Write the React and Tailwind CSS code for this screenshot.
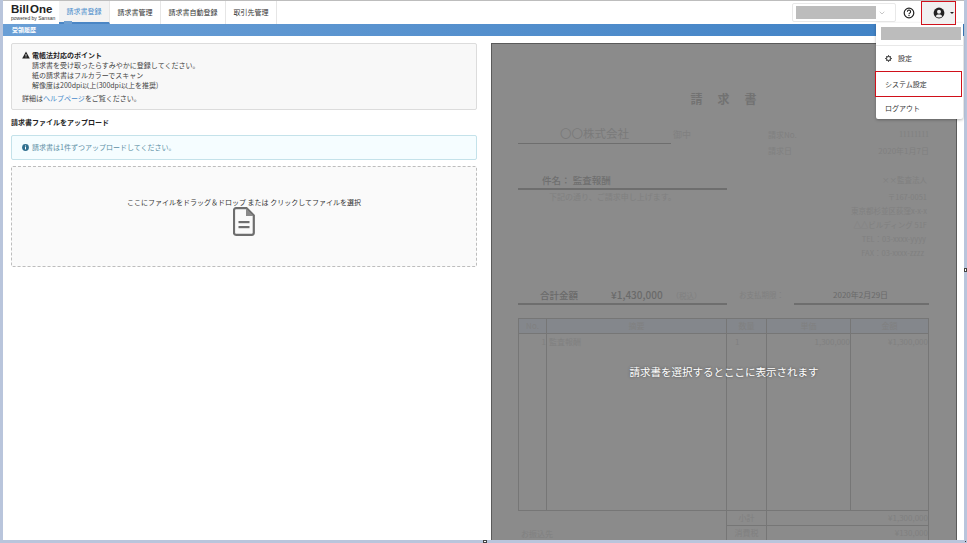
import { ChevronDown } from 'lucide-react';

const font = { fontFamily: '"Noto Sans CJK JP", "Noto Sans", sans-serif' };

const tabs = ['請求書登録', '請求書管理', '請求書自動登録', '取引先管理'];

function Logo() {
  return (
    <div className="w-[56px] pl-[8px] pt-[3px] shrink-0 font-['Liberation_Sans',sans-serif]">
      <div className="text-[11.5px] leading-[11px] font-bold text-[#222] [word-spacing:-2px] whitespace-nowrap">
        Bill One
      </div>
      <div className="text-[5px] leading-[6px] text-[#333] whitespace-nowrap">
        powered by Sansan
      </div>
    </div>
  );
}

function Header() {
  return (
    <div className="h-[23px] flex items-stretch bg-white">
      <Logo />
      <nav className="flex">
        {tabs.map((t, i) => (
          <div
            key={t}
            className={`relative h-[23px] flex items-center justify-center px-[7.5px] text-[7px] border-r border-[#e6e6e6] ${
              i === 0 ? 'bg-[#f3f3f3] text-[#4a8ccb] border-b-2 border-b-[#4a86c5]' : 'text-[#333]'
            }`}
          >
            {t}
            {i === 0 && <div className="absolute left-[5px] bottom-[-2px] w-[8px] h-[3px] bg-[#6f9fd0]" />}
          </div>
        ))}
      </nav>
      <div className="ml-auto flex items-start pr-[8px]">
        <div className="mt-[2px] w-[104px] h-[19px] border border-[#e8e8e8] rounded-[2px] flex items-center pl-[3px]">
          <div className="w-[80px] h-[13px] bg-[#bcbcbc]" />
          <ChevronDown className="w-[8px] h-[8px] ml-[2px] text-[#aaa]" />
        </div>
        <div className="w-[25px] h-[23px] flex items-center justify-center">
          <svg width="12" height="12" viewBox="0 0 12 12" fill="none">
            <circle cx="6" cy="6" r="4.8" stroke="#222" strokeWidth="1.2" />
            <path d="M4.4 4.7a1.6 1.6 0 1 1 2.4 1.4c-.6.3-.8.6-.8 1.1" stroke="#222" strokeWidth="1.1" />
            <rect x="5.4" y="8" width="1.2" height="1.1" fill="#222" />
          </svg>
        </div>
        <div className="relative z-30 w-[35px] h-[24px] bg-[#f0f0f0] flex items-center justify-center border border-[#d0101a]">
          <svg width="12" height="12" viewBox="0 0 12 12">
            <circle cx="6" cy="6" r="5.4" fill="#222" />
            <circle cx="6" cy="4.8" r="2" fill="#f0f0f0" />
            <path d="M2.6 9.2C3.4 7.8 4.6 7.4 6 7.4s2.6.4 3.4 1.8A4.6 4.6 0 0 1 6 10.6a4.6 4.6 0 0 1-3.4-1.4z" fill="#f0f0f0" />
          </svg>
          <div className="absolute right-[1px] top-[10px] w-0 h-0 border-x-[2.5px] border-x-transparent border-t-[2.5px] border-t-[#222]" />
        </div>
      </div>
    </div>
  );
}

function Notice() {
  return (
    <div className="h-[67px] bg-[#f8f8f8] border border-[#dcdcdc] rounded-[2px] pl-[10px] pt-[6px] text-[7px] leading-[10px] text-[#444]">
      <div className="flex items-center gap-[2px] font-bold text-[#222]">
        <svg width="8" height="8" viewBox="0 0 8 8">
          <path d="M4 .6 7.8 7.4H.2z" fill="#222" />
          <rect x="3.6" y="3" width=".8" height="2.2" fill="#fff" />
          <rect x="3.6" y="5.6" width=".8" height=".8" fill="#fff" />
        </svg>
        電帳法対応のポイント
      </div>
      <div className="pl-[10px]">請求書を受け取ったらすみやかに登録してください。</div>
      <div className="pl-[10px]">紙の請求書はフルカラーでスキャン</div>
      <div className="pl-[10px]">解像度は200dpi以上(300dpi以上を推奨)</div>
      <div className="mt-[3px]">
        詳細は<span className="text-[#4a8ccb]">ヘルプページ</span>をご覧ください。
      </div>
    </div>
  );
}

function LeftPane() {
  return (
    <div className="w-[488px] pl-[8px] pr-[14px] pt-[7px] shrink-0">
      <Notice />
      <div className="mt-[7px] text-[7px] leading-[10px] font-bold text-[#222]">請求書ファイルをアップロード</div>
      <div className="mt-[8px] h-[25px] flex items-center gap-[3px] pl-[10px] bg-[#f5fdff] border border-[#c4e2ea] rounded-[2px] text-[7px] text-[#5c8fa5]">
        <svg width="7" height="7" viewBox="0 0 7 7">
          <circle cx="3.5" cy="3.5" r="3.4" fill="#31708f" />
          <rect x="3" y="3" width="1" height="2.4" fill="#fff" />
          <rect x="3" y="1.5" width="1" height="1" fill="#fff" />
        </svg>
        請求書は1件ずつアップロードしてください。
      </div>
      <div className="mt-[6px] h-[101px] bg-[#fafafa] border border-dashed border-[#bdbdbd] rounded-[2px] flex flex-col items-center pt-[30px]">
        <div className="text-[7px] leading-[10px] text-[#333] whitespace-nowrap">ここにファイルをドラッグ＆ドロップ または クリックしてファイルを選択</div>
        <svg width="22" height="29" viewBox="0 0 22 29" fill="none">
          <path d="M3 1.2h10.5l7.3 7.3v17.3a2 2 0 0 1-2 2H3a2 2 0 0 1-2-2V3.200a2 2 0 0 1 2-2z" stroke="#6e6e6e" strokeWidth="2.2" />
          <path d="M13 1.5v7.5h7.5z" fill="#8a8a8a" />
          <rect x="5.5" y="14" width="11" height="2.2" fill="#6e6e6e" />
          <rect x="5.5" y="19" width="11" height="2.2" fill="#6e6e6e" />
        </svg>
      </div>
    </div>
  );
}

const rows = [
  ['小計', '¥1,300,000'],
  ['消費税', '¥130,000'],
];

// 請求書サンプル (プレビューの背景)
function InvoiceSample() {
  return (
    <div className="h-full pl-[26px] pr-[27px] text-[#808080]">
      <div className="pt-[47px] text-center text-[12px] leading-[16px] font-bold text-[#727272] tracking-[15px] pl-[15px]">請求書</div>
      <div className="mt-[17px] flex items-start">
        <div className="w-[250px] flex items-end">
          <div className="w-[153px] border-b border-[#6e6e6e] text-center text-[11.5px] leading-[19px] text-[#7a7a7a]">〇〇株式会社</div>
          <div className="ml-[2px] text-[9px] leading-[18px]">御中</div>
        </div>
        <div className="mt-[3px] flex-1 text-[8px] leading-[16px]">
          <div className="flex justify-between"><span>請求No.</span><span className="font-['Liberation_Serif',serif]">11111111</span></div>
          <div className="flex justify-between"><span>請求日</span><span>2020年1月7日</span></div>
        </div>
      </div>
      <div className="mt-[14px] flex">
        <div className="w-[209px]">
          <div className="border-b-2 border-[#6e6e6e] pl-[24px] text-[9.5px] leading-[15px] text-[#6f6f6f] font-medium">件名： 監査報酬</div>
          <div className="pl-[31px] text-[8px] leading-[14px]">下記の通り、ご請求申し上げます。</div>
        </div>
        <div className="flex-1 text-right text-[7.5px] leading-[14px]">
          <div className="mb-[3px] pr-[2px]">××監査法人</div>
          <div className="pr-[2px]">〒167-0051</div>
          <div className="pr-[2px]">東京都杉並区荻窪x-x-x</div>
          <div className="pr-[2px]">△△ビルディング 51F</div>
          <div className="pr-[3px]">TEL：03-xxxx-yyyy</div>
          <div className="pr-[5px]">FAX：03-xxxx-zzzz</div>
        </div>
      </div>
      <div className="mt-[28px] flex">
        <div className="w-[209px] border-b-2 border-[#6e6e6e] pl-[22px] flex items-baseline text-[9.5px] leading-[14px] text-[#6a6a6a] font-medium">
          <span>合計金額</span>
          <span className="ml-[33px] text-[10px]">¥1,430,000</span>
          <span className="ml-[9px] text-[7.5px] text-[#808080] font-normal">（税込）</span>
        </div>
        <div className="ml-[12px] w-[47px] text-[7.5px] leading-[14px] whitespace-nowrap">お支払期限：</div>
        <div className="ml-[8px] flex-1 border-b-2 border-[#6e6e6e] pl-[39px] text-[8px] leading-[14px] text-[#6a6a6a]">2020年2月29日</div>
      </div>
      <div className="mt-[13px] border border-[#767676] text-[8px]">
        <div className="flex h-[15px] leading-[14px] text-center bg-[#84878c] border-b border-[#767676]">
          <div className="w-[28px] border-r border-[#767676]">No.</div>
          <div className="w-[180px] border-r border-[#767676]">摘要</div>
          <div className="w-[40px] border-r border-[#767676]">数量</div>
          <div className="w-[84px] border-r border-[#767676]">単価</div>
          <div className="flex-1">金額</div>
        </div>
        <div className="flex h-[176px] leading-[15px]">
          <div className="w-[28px] border-r border-[#767676] text-right">1</div>
          <div className="w-[180px] border-r border-[#767676] pl-[2px]">監査報酬</div>
          <div className="w-[40px] border-r border-[#767676] pl-[8px]">1</div>
          <div className="w-[84px] border-r border-[#767676] text-right">1,300,000</div>
          <div className="flex-1 text-right">¥1,300,000</div>
        </div>
      </div>
      <div className="flex">
        <div className="w-[208px] pt-[15px] pl-[3px] text-[8px] leading-[15px]">お振込先</div>
        <div className="flex-1 border-x border-[#767676]">
          {rows.map(([k, v]) => (
            <div key={k} className="flex h-[15px] leading-[14px] text-[8px] border-b border-[#767676]">
              <div className="w-[40px] border-r border-[#767676] text-center">{k}</div>
              <div className="flex-1 text-right">{v}</div>
            </div>
          ))}
        </div>
      </div>
    </div>
  );
}

function PreviewPane() {
  return (
    <div className="relative mt-[7px] w-[466px] shrink-0 bg-[#8b8b8b] border-l border-t border-r border-[#5a5a5a] overflow-hidden">
      <InvoiceSample />
      <div className="absolute inset-0 flex items-center justify-center pt-[160px] text-[10.5px] text-white [text-shadow:0_0_3px_rgba(0,0,0,0.45)]">
        請求書を選択するとここに表示されます
      </div>
    </div>
  );
}

function UserMenu() {
  return (
    <div className="absolute z-20 left-[876px] top-[23px] w-[87px] h-[96px] bg-white rounded-b-[2px] shadow-[0_1px_3px_rgba(0,0,0,0.3)] text-[7px] text-[#333]">
      <div className="h-[23px] border-b border-[#e8e8e8] pt-[4px] pl-[5px] pr-[2px]">
        <div className="h-[13px] bg-[#bcbcbc]" />
      </div>
      <div className="h-[25px] flex items-center pl-[9px] gap-[6px]">
        <svg width="7" height="7" viewBox="0 0 8 8">
          <circle cx="4" cy="4" r="2.4" fill="none" stroke="#555" strokeWidth="1.4" />
          <path d="M4 0v1.5M4 6.5V8M0 4h1.5M6.5 4H8M1.2 1.2l1 1M5.8 5.8l1 1M6.8 1.2l-1 1M2.2 5.8l-1 1" stroke="#555" strokeWidth="1.1" />
        </svg>
        設定
      </div>
      <div className="h-[26px] w-[87px] -ml-[1px] flex items-center pl-[9px] border border-[#d0101a]">システム設定</div>
      <div className="h-[22px] flex items-center pl-[9px]">ログアウト</div>
    </div>
  );
}

export default function App() {
  return (
    <div className="relative w-[967px] h-[543px] overflow-hidden bg-[#b9c5dc] px-[3px]" style={font}>
      <div className="h-[540px] bg-white flex flex-col border-t border-[#bdbdbd]">
        <Header />
        <div className="h-[12px] shrink-0 bg-gradient-to-r from-[#6a9fd6] to-[#3d80c4] text-white text-[6px] leading-[12px] pl-[9px] font-bold">受領履歴</div>
        <div className="flex flex-1 min-h-0 bg-white">
          <LeftPane />
          <PreviewPane />
        </div>
      </div>
      <UserMenu />
      {/* ウィンドウのリサイズ用ハンドル */}
      <div className="absolute left-[483px] bottom-0 w-[4px] h-[3px] bg-white border border-[#444]" />
      <div className="absolute right-0 top-[268px] w-[3px] h-[4px] bg-white border border-[#444]" />
      <div className="absolute right-[1px] bottom-[1px] w-[1.5px] h-[1.5px] bg-[#333]" />
    </div>
  );
}
